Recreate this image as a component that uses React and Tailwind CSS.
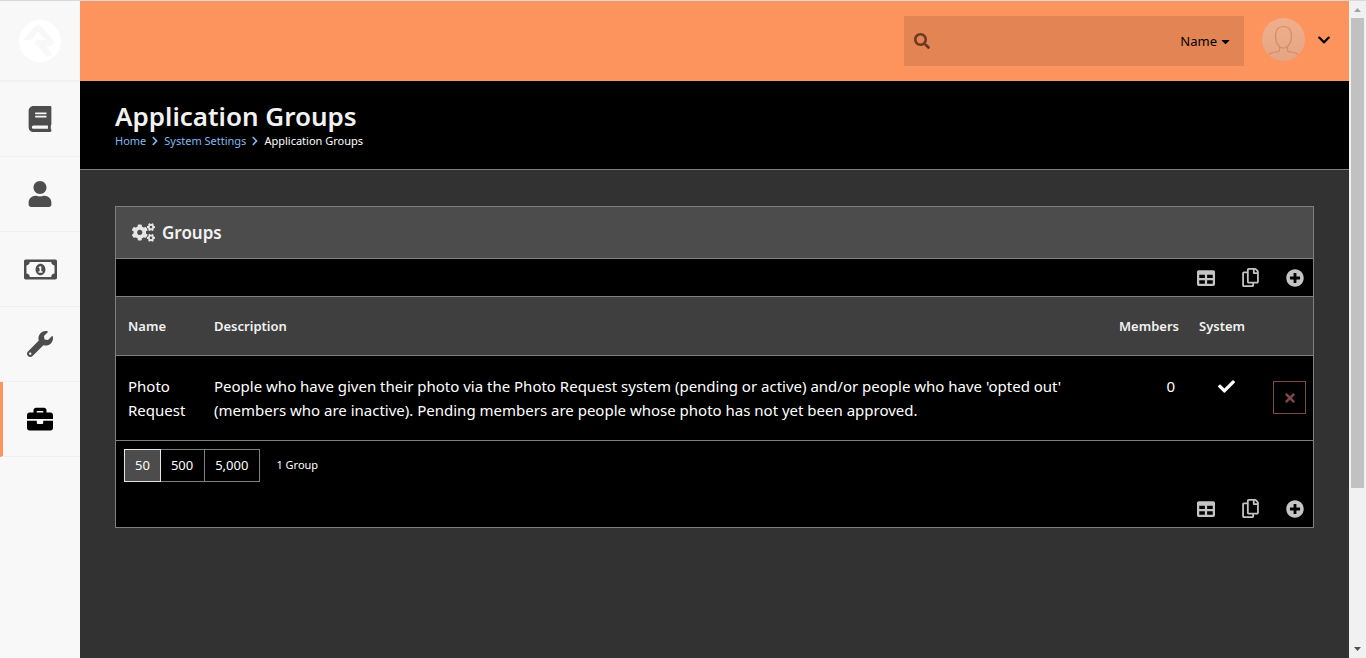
import {
    FaBook, FaUser, FaRegMoneyBillAlt, FaWrench, FaBriefcase, FaSearch, FaCaretDown,
    FaChevronDown, FaChevronRight, FaCogs, FaTable, FaRegCopy, FaPlusCircle, FaCheck, FaTimes,
} from "react-icons/fa";

const navItems = [
    { label: "Intranet", icon: FaBook, size: 26 },
    { label: "People", icon: FaUser, size: 26 },
    { label: "Finance", icon: FaRegMoneyBillAlt, size: 33 },
    { label: "Tools", icon: FaWrench, size: 26 },
    { label: "Admin Tools", icon: FaBriefcase, size: 26, active: true },
];

const groups = [
    {
        name: "Photo Request",
        description: "People who have given their photo via the Photo Request system (pending or active) and/or people who have 'opted out' (members who are inactive). Pending members are people whose photo has not yet been approved.",
        members: 0,
        system: true,
    },
];

const pageSizes = ["50", "500", "5,000"];

function Logo() {
    return (
        <svg viewBox="0 0 42 42" className="size-[42px]" aria-hidden="true">
            <circle cx="21" cy="21" r="21" fill="#fff" />
            <path
                d="M4.500 20L16 6Q19 2.500 22 6L33.500 19.500Q36.500 24 32.500 26L27 26.500L34.500 35.500H26.500L16.500 24Q15.500 20.500 18.500 20H26.500L19 11.500L12 20Z"
                fill="#f8f8f8"
            />
        </svg>
    );
}

function Avatar() {
    return (
        <svg viewBox="0 0 43 43" className="size-[43px]" aria-hidden="true">
            <defs>
                <linearGradient id="avatar" x1="0" y1="0" x2="0" y2="1">
                    <stop offset="0" stopColor="#f0ae8d" />
                    <stop offset="1" stopColor="#e5a582" />
                </linearGradient>
            </defs>
            <circle cx="21.500" cy="21.500" r="21.500" fill="url(#avatar)" />
            <path
                d="M21.500 8.500C16 8.500 13.500 12.500 13.500 18C13.500 25 17 30 21.500 30S29.500 25 29.500 18C29.500 12.500 27 8.500 21.500 8.500ZM17.500 29V32.500Q17 34 14 34Q8 34.500 7 37M25.500 29V32.500Q26 34 29 34Q35 34.500 36 37"
                fill="none"
                stroke="#d08e6c"
                strokeWidth="1.200"
            />
        </svg>
    );
}

function Sidebar() {
    return (
        <nav className="w-20 shrink-0 bg-[#f8f8f8]">
            <a href="#" aria-label="Home" className="flex h-[81px] items-center justify-center border-b-2 border-[#f0f0f0]">
                <Logo />
            </a>
            {navItems.map(({ label, icon: Icon, size, active }) => (
                <a
                    key={label}
                    href="#"
                    aria-label={label}
                    className={
                        active
                            ? "flex h-[75px] items-center justify-center border-b border-l-3 border-b-[#f0f0f0] border-l-[#fd935d] pr-[3px] text-black"
                            : "flex h-[75px] items-center justify-center border-b border-[#f0f0f0] text-[#4d4d4d]"
                    }
                >
                    <Icon size={size} />
                </a>
            ))}
        </nav>
    );
}

function TopBar() {
    return (
        <header className="flex h-20 items-start justify-end bg-[#fd935d] pr-[18px]">
            <div className="mt-[15px] flex h-[50px] w-[340px] items-center bg-[#e28454] px-[10px]">
                <FaSearch size={16} className="shrink-0 text-[#6b3a20]" />
                <input type="search" aria-label="Search" className="h-full min-w-0 flex-1 bg-transparent px-2 text-sm outline-none" />
                <button type="button" className="flex items-center gap-[2px] pr-[2px] text-[13px] leading-5">
                    Name <FaCaretDown size={13} />
                </button>
            </div>
            <button type="button" aria-label="My account" className="mt-[17px] ml-[18px] flex items-center gap-3">
                <Avatar />
                <FaChevronDown size={14} />
            </button>
        </header>
    );
}

function GridActions() {
    return (
        <div className="flex h-[37px] items-center justify-end gap-[26px] pr-[9px] text-[#c4c4c4]">
            <button type="button" aria-label="Export to Excel"><FaTable size={18} /></button>
            <button type="button" aria-label="Merge template"><FaRegCopy size={19} /></button>
            <button type="button" aria-label="Add group"><FaPlusCircle size={18} /></button>
        </div>
    );
}

function GroupsTable() {
    return (
        <table className="w-full table-fixed border-y border-[#7f7f7f] text-left">
            <thead>
                <tr className="h-[59px] border-b border-[#7f7f7f] bg-[#3f3f3f] text-[13px] text-[#f2f2f2]">
                    <th className="w-[86px] pt-[2px] pl-3 font-semibold">Name</th>
                    <th className="pt-[2px] pl-3 font-semibold">Description</th>
                    <th className="w-20 pt-[2px] pl-3 font-semibold">Members</th>
                    <th className="w-[78px] pt-[2px] pl-3 font-semibold">System</th>
                    <th className="w-12" aria-label="Delete" />
                </tr>
            </thead>
            <tbody>
                {groups.map((group) => (
                    <tr key={group.name} className="h-[85px] align-top text-[15px] leading-6">
                        <td className="pt-[18px] pl-3">{group.name}</td>
                        <td className="pt-[18px] pr-6 pl-3">{group.description}</td>
                        <td className="pt-[18px] pr-3 text-right">{group.members}</td>
                        <td className="pt-[22px]">{group.system && <FaCheck size={17} className="mx-auto" />}</td>
                        <td className="pt-[25px] pl-2">
                            <button
                                type="button"
                                aria-label="Delete group"
                                className="flex size-[33px] items-center justify-center border border-[#7c4a46] text-[#7c4a46]"
                            >
                                <FaTimes size={14} />
                            </button>
                        </td>
                    </tr>
                ))}
            </tbody>
        </table>
    );
}

function Pager() {
    return (
        <div className="flex items-center gap-4 p-2">
            <div className="flex text-[13px]">
                {pageSizes.map((size, i) => (
                    <button
                        key={size}
                        type="button"
                        className={
                            i === 0
                                ? "h-[33px] border border-[#e6e6e6] bg-[#4c4c4c] px-[10px]"
                                : "h-[33px] border border-l-0 border-[#7f7f7f] pr-[11px] pl-[10px]"
                        }
                    >
                        {size}
                    </button>
                ))}
            </div>
            <span className="text-[11px]">1 Group</span>
        </div>
    );
}

function Scrollbar() {
    return (
        <div className="flex w-[17px] shrink-0 flex-col items-center bg-[#f1f1f1]" aria-hidden="true">
            <svg viewBox="0 0 17 17" className="size-[17px]"><path d="M5 11L8.500 7L12 11Z" fill="#a3a3a3" /></svg>
            <div className="flex w-[13px] flex-1 flex-col">
                <div className="flex-[40] bg-[#c1c1c1]" />
                <div className="flex-[13]" />
            </div>
            <svg viewBox="0 0 17 17" className="size-[17px]"><path d="M5 6L8.500 10L12 6Z" fill="#505050" /></svg>
        </div>
    );
}

export default function App() {
    return (
        <div className="flex min-h-screen border-t border-[#d9d9dc] bg-[#323232] font-['Noto_Sans',sans-serif]">
            <Sidebar />
            <main className="min-w-0 flex-1">
                <TopBar />
                <div className="h-[89px] border-b border-[#7f7f7f] bg-black px-[35px] pt-[18px] text-white">
                    <h1 className="text-[26px] leading-[34px] font-semibold text-[#f2f2f2]">Application Groups</h1>
                    <nav aria-label="Breadcrumb" className="flex items-center gap-1 text-[11px] leading-4 text-[#83b8f2]">
                        <a href="#">Home</a>
                        <FaChevronRight size={10} />
                        <a href="#">System Settings</a>
                        <FaChevronRight size={10} />
                        <span className="text-white">Application Groups</span>
                    </nav>
                </div>
                <section className="mx-[35px] mt-9 border border-[#7f7f7f] bg-black text-white">
                    <div className="flex h-[52px] items-center gap-[7px] border-b border-[#7f7f7f] bg-[#4c4c4c] px-4 text-[#e6e6e6]">
                        <FaCogs size={23} />
                        <h2 className="text-[17px] font-semibold text-[#f2f2f2]">Groups</h2>
                    </div>
                    <GridActions />
                    <GroupsTable />
                    <Pager />
                    <GridActions />
                </section>
            </main>
            <Scrollbar />
        </div>
    );
}
